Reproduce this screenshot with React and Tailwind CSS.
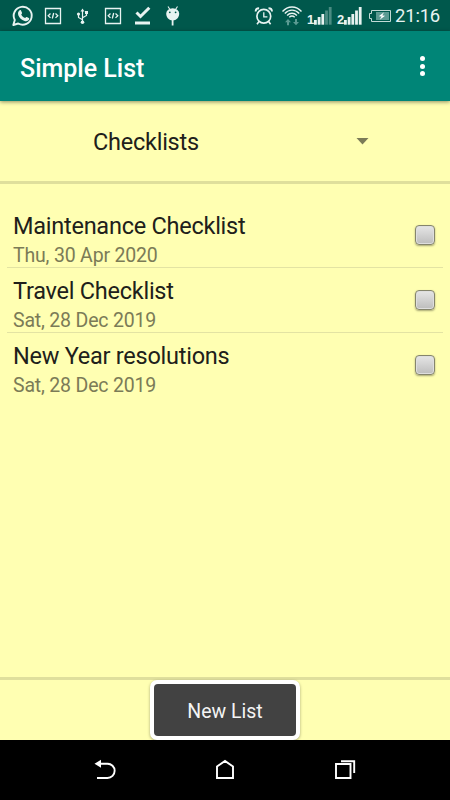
import { useState } from 'react'

const LISTS = [
  { id: 1, title: 'Maintenance Checklist', date: 'Thu, 30 Apr 2020' },
  { id: 2, title: 'Travel Checklist', date: 'Sat, 28 Dec 2019' },
  { id: 3, title: 'New Year resolutions', date: 'Sat, 28 Dec 2019' },
]

/* Status bar glyphs share a 31px tall cell */
function StatusIcon({ width = 30, children }) {
  return (
    <svg
      width={width}
      height="31"
      viewBox={`0 0 ${width} 31`}
      fill="none"
      stroke="#e8f3f1"
      className="flex-shrink-0"
    >
      {children}
    </svg>
  )
}

function WhatsAppIcon() {
  return (
    <StatusIcon>
      <path d="M5.300 25 6.800 20A9 9 0 1 1 10.200 23.500Z" strokeWidth="1.900" strokeLinejoin="round" />
      <path
        d="M11.300 10.600c.6-.6 1.300-.7 1.700 0l1 2.100c.2.500-.1.900-.8 1.700.9 1.700 2.200 2.900 4 3.600.8-.9 1.100-1.300 1.600-1l2 1c.6.3.5 1 .1 1.700-.8 1.300-2.500 1.800-4.300 1.200-3.100-1-5.400-3.200-6.300-5.700-.6-1.800-.2-3.500 1-4.600z"
        fill="#e8f3f1"
        stroke="none"
      />
    </StatusIcon>
  )
}

function CodeIcon() {
  return (
    <StatusIcon>
      <path d="M7.500 8.500h15v15h-15z" strokeWidth="1.300" />
      <path d="m12.500 13.500-2.300 2.200 2.300 2.200M17.500 13.500l2.300 2.200-2.300 2.200M15.700 13l-1.400 5.500" strokeWidth="1.300" />
    </StatusIcon>
  )
}

function UsbIcon() {
  return (
    <StatusIcon>
      <path d="M14.500 11v11M14.500 19.800l-4-2.300v-3M14.500 17.800l4-2.300v-2" strokeWidth="1.200" />
      <path d="m14.500 8.500 2 3h-4zM17 11h3v3h-3z" fill="#e8f3f1" stroke="none" />
      <circle cx="10.500" cy="14" r="1.600" fill="#e8f3f1" stroke="none" />
      <circle cx="14.500" cy="22.300" r="1.800" fill="#e8f3f1" stroke="none" />
    </StatusIcon>
  )
}

function DoneIcon() {
  return (
    <StatusIcon>
      <path d="m8.500 12.500 4 4 8.800-8.800" strokeWidth="3" />
      <path d="M7 23h15" strokeWidth="3" />
    </StatusIcon>
  )
}

function BugdroidIcon() {
  return (
    <StatusIcon>
      <path d="m10 6.500 2 3M19.500 6.500l-2 3" strokeWidth="1.100" />
      <path d="M8.200 13.500a6.500 5.300 0 0 1 13 0c0 4-2.800 6.900-6.500 6.900s-6.500-2.900-6.500-6.900z" fill="#e8f3f1" stroke="none" />
      <circle cx="11.800" cy="12.300" r=".9" fill="#00584c" stroke="none" />
      <circle cx="17.600" cy="12.300" r=".9" fill="#00584c" stroke="none" />
      <path d="M14.600 20v5.500" strokeWidth="1.800" />
    </StatusIcon>
  )
}

function AlarmIcon() {
  return (
    <StatusIcon>
      <circle cx="15.800" cy="16.300" r="6.900" strokeWidth="1.700" />
      <path d="M15.800 12.300v4.500h3.600" strokeWidth="1.300" />
      <path d="M7.600 11.600c0-2 1.300-3.400 3.500-3.400M24 11.600c0-2-1.300-3.400-3.500-3.400" strokeWidth="1.900" />
      <path d="m11 21.500-2 2.700M20.600 21.500l2 2.700" strokeWidth="1.600" />
    </StatusIcon>
  )
}

function WifiIcon() {
  return (
    <StatusIcon width={28}>
      <path
        d="M4.500 11.500c5.300-6 13.700-6 19 0M6.800 13.500c4.100-4.500 10.300-4.500 14.400 0M9.100 15.500c2.900-3 6.900-3 9.800 0M11.300 17.300c1.700-1.600 3.700-1.600 5.400 0"
        strokeWidth="1.400"
      />
      <path d="m10 19 3 3.200h-2v3H9v-3H7zM18 25.200 15 22h2v-3h2v3h2z" fill="#5b9a92" stroke="none" />
    </StatusIcon>
  )
}

function SignalIcon({ sim, level }) {
  const bars = [20, 17, 14, 10.500, 7]
  return (
    <div className="flex">
      <span className="w-[8px] pt-[13px] pl-px text-center font-['Liberation_Sans'] text-[13px] leading-[14px] font-bold text-[#e8f3f1]">
        {sim}
      </span>
      <svg width="20" height="31" viewBox="0 0 20 31">
        {bars.map((y, i) => (
          <rect
            key={y}
            x={i * 3.700}
            y={y}
            width="2.800"
            height={24.700 - y}
            fill={i < level ? '#e8f3f1' : '#4a8b82'}
          />
        ))}
      </svg>
    </div>
  )
}

function BatteryIcon() {
  return (
    <StatusIcon width={24}>
      <path d="M3.500 10.500h19v11h-19v-3h-2v-5h2z" strokeWidth="1" stroke="#c3dad6" />
      <path d="M8 12h13v8H8z" fill="#5b9a92" stroke="none" />
      <path d="m16 12.300-5.200 3.900 2.800.4-1.900 3.200 5.400-4-2.800-.4z" fill="#fff" stroke="none" />
    </StatusIcon>
  )
}

function StatusBar() {
  return (
    <div className="flex h-[31px] items-center bg-[#00584c] pl-2">
      <WhatsAppIcon />
      <CodeIcon />
      <UsbIcon />
      <CodeIcon />
      <DoneIcon />
      <BugdroidIcon />
      <div className="ml-[60px] flex items-center">
        <AlarmIcon />
        <WifiIcon />
        <SignalIcon sim="1" level={3} />
        <div className="ml-[2px]">
          <SignalIcon sim="2" level={5} />
        </div>
        <div className="ml-[4px]">
          <BatteryIcon />
        </div>
        <span className="ml-[3px] pt-px text-[18.500px] leading-[30px] tracking-[-0.2px] text-[#e8f3f1]">21:16</span>
      </div>
    </div>
  )
}

function Checkbox({ checked, onChange, label }) {
  return (
    <button
      role="checkbox"
      aria-checked={checked}
      aria-label={label}
      onClick={onChange}
      className="flex h-[20px] w-[20px] items-center justify-center rounded-[4px] border border-[#85856c] bg-linear-to-b from-[#e6e6e6] to-[#bdbdbd] text-[14px] text-[#333] shadow-[inset_0_0_0_1px_#dedede,0_1px_2px_rgba(0,0,0,0.35)]"
    >
      {checked ? '✓' : ''}
    </button>
  )
}

function ListRow({ item, checked, onToggle, last }) {
  return (
    <li className={`flex h-[65px] justify-between pr-[8px] pl-[6px] ${last ? '' : 'border-b border-[#e3e3a3]'}`}>
      <div className="pt-[9px]">
        <p className="text-[23.500px] leading-[28px] tracking-[-0.25px] text-[#20201a]">{item.title}</p>
        <p className="mt-[4px] text-[19.500px] leading-[24px] tracking-[-0.18px] text-[#7b7b57]">{item.date}</p>
      </div>
      <div className="pt-[22px]">
        <Checkbox checked={checked} onChange={onToggle} label={item.title} />
      </div>
    </li>
  )
}

function NavBar() {
  return (
    <div className="flex h-[60px] items-center justify-between bg-black px-[90px]">
      <svg width="30" height="30" viewBox="0 0 30 30" fill="none" stroke="#fff" strokeWidth="1.900">
        <path d="M10 8.700h7.500a7 7 0 0 1 0 14.300H7" />
        <path d="m4.500 8.700 6.500-4v8z" fill="#fff" stroke="none" />
      </svg>
      <svg width="30" height="30" viewBox="0 0 30 30" fill="none" stroke="#fff" strokeWidth="1.900">
        <path d="M7 23V11.500L15 6l8 5.500V23z" />
      </svg>
      <svg width="30" height="30" viewBox="0 0 30 30" fill="none" stroke="#fff" strokeWidth="1.900">
        <path d="M6 9h14.500v14H6zM11 6.300h13.200V18" />
      </svg>
    </div>
  )
}

export default function App() {
  const [checked, setChecked] = useState({})

  const toggle = (id) => setChecked(c => ({ ...c, [id]: !c[id] }))

  return (
    <div className="flex h-[800px] w-[450px] flex-col overflow-hidden bg-[#ffffb2] font-[Roboto,sans-serif]">
      <StatusBar />

      {/* App bar */}
      <header className="z-10 flex h-[70px] items-center justify-between bg-[#008577] pr-[20px] pl-[20px] shadow-[0_1px_4px_rgba(0,0,0,0.45)]">
        <h1 className="pt-[5px] text-[25px] leading-[30px] font-medium text-white">Simple List</h1>
        <button aria-label="More options" className="flex w-[15px] flex-col items-center gap-[2.500px]">
          <span className="h-[5px] w-[5px] rounded-full bg-white" />
          <span className="h-[5px] w-[5px] rounded-full bg-white" />
          <span className="h-[5px] w-[5px] rounded-full bg-white" />
        </button>
      </header>

      {/* Category spinner */}
      <button className="flex h-[83px] items-center justify-between border-b-3 border-[#dfdf9c] pr-[81px] pl-[93px]">
        <span className="pt-[2px] text-[23.500px] leading-[28px] tracking-[-0.25px] text-[#20201a]">Checklists</span>
        <svg width="13" height="7" viewBox="0 0 13 7">
          <path d="M.5 0h12l-6 6.500z" fill="#7b7b57" />
        </svg>
      </button>

      <ul className="flex-1 px-[7px] pt-[19px]">
        {LISTS.map((item, i) => (
          <ListRow
            key={item.id}
            item={item}
            checked={!!checked[item.id]}
            onToggle={() => toggle(item.id)}
            last={i === LISTS.length - 1}
          />
        ))}
      </ul>

      <div className="flex h-[63px] justify-center border-t-3 border-[#dfdf9c]">
        <button className="h-[60px] w-[150px] rounded-[7px] border-4 border-white bg-white shadow-[0_1px_3px_rgba(0,0,0,0.35)]">
          <span className="flex h-[52px] items-center justify-center rounded-[4px] bg-[#424242] pt-[3px] text-[19.500px] text-[#f4f4f4]">
            New List
          </span>
        </button>
      </div>

      <NavBar />
    </div>
  )
}
